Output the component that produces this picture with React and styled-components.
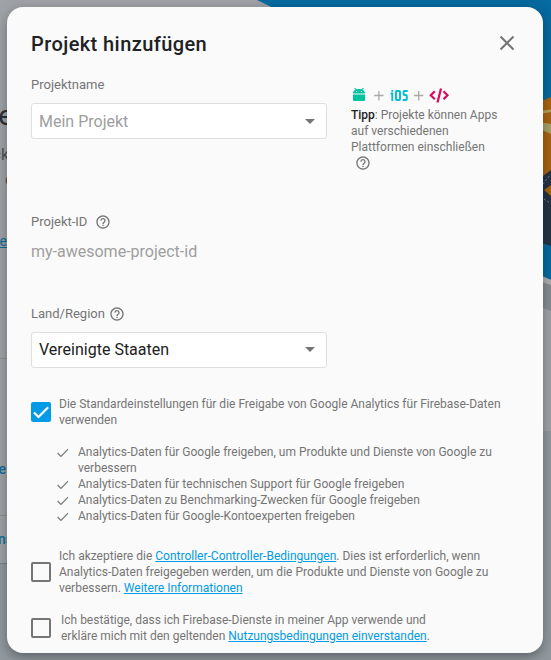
import React from "react";
import styled, { createGlobalStyle } from "styled-components";

const GlobalStyle = createGlobalStyle`
  * { box-sizing: border-box; }
  body {
    margin: 0;
    overflow: hidden;
    font-family: Roboto, "Liberation Sans", sans-serif;
    background: #a0a4a8;
  }
`;

const Screen = styled.div`
  position: relative;
  width: 551px;
  height: 660px;
  padding: 7px 8px 7px 7px;
  overflow: hidden;
`;

const Scene = styled.svg`
  position: absolute;
  inset: 0;
`;

const PageText = styled.span`
  position: absolute;
  right: ${(p) => p.$right}px;
  top: ${(p) => p.$top}px;
  font-size: ${(p) => p.$size}px;
  line-height: 20px;
  font-weight: ${(p) => p.$weight || 400};
  color: ${(p) => p.$color || "#505255"};
  text-decoration: ${(p) => (p.$underline ? "underline" : "none")};
  white-space: nowrap;
`;

const Dialog = styled.section`
  position: relative;
  width: 536px;
  height: 646px;
  padding: 24px;
  border-radius: 16px;
  background: #fafafa;
  box-shadow: 0 5px 10px -2px rgba(0, 0, 0, 0.25), 0 3px 16px 2px rgba(0, 0, 0, 0.16);
  color: #757575;
`;

const Header = styled.header`
  display: flex;
  justify-content: space-between;
  height: 41px;
`;

const Title = styled.h1`
  margin: 0;
  font-size: 20px;
  line-height: 26px;
  font-weight: 500;
  letter-spacing: 0.42px;
  color: #202124;
`;

const CloseButton = styled.button`
  width: 24px;
  height: 24px;
  padding: 0;
  border: 0;
  background: none;
  color: #757575;
`;

const FormTop = styled.div`
  display: grid;
  grid-template-columns: 296px 150px;
  column-gap: 24px;
  height: 137px;
`;

const Field = styled.div`
  display: flex;
  flex-direction: column;
  height: ${(p) => p.$height || "auto"};
`;

const Label = styled.div`
  display: flex;
  align-items: center;
  gap: ${(p) => p.$gap || 0}px;
  height: 24px;
  font-size: 13px;

  svg {
    margin-top: 2px;
  }
`;

const SelectBox = styled.div`
  display: flex;
  align-items: center;
  justify-content: space-between;
  width: 296px;
  height: 36px;
  margin-top: 7px;
  padding: 0 11px ${(p) => (p.$filled ? 2 : 0)}px 7px;
  border: 1px solid #dfdfdf;
  border-radius: 3px;
  background: #fff;
  font-size: 16px;
  color: ${(p) => (p.$filled ? "#212121" : "#9e9e9e")};
`;

const ProjectId = styled.div`
  margin-top: 9px;
  font-size: 16px;
  line-height: 20px;
  color: #9e9e9e;
`;

const Tip = styled.aside`
  padding-top: 14px;
  font-size: 12px;
  line-height: 16px;
`;

const Platforms = styled.svg`
  display: block;
  margin-bottom: 3px;
`;

const Strong = styled.b`
  font-weight: 500;
  color: #212121;
`;

const TipHelp = styled.div`
  display: flex;
  padding-left: 4px;
`;

const Consent = styled.label`
  display: flex;
  align-items: center;
  gap: ${(p) => p.$gap || 8}px;
  margin-top: ${(p) => p.$top}px;
  font-size: 12px;
  line-height: 16px;
`;

const Box = styled.span`
  display: flex;
  flex: none;
  align-items: center;
  justify-content: center;
  width: 20px;
  height: 20px;
  border: 2px solid ${(p) => (p.$checked ? "#039be5" : "#757575")};
  border-radius: 2px;
  background: ${(p) => (p.$checked ? "#039be5" : "transparent")};
`;

const BoxTick = styled.svg`
  flex: none;
`;

const Copy = styled.span`
  white-space: nowrap;
`;

const Link = styled.a`
  color: #039be5;
  text-decoration: underline;
`;

const SharingList = styled.ul`
  margin: 16px 0 0;
  padding: 0 0 0 26px;
  list-style: none;
  font-size: 12px;
  line-height: 16px;
`;

const SharingItem = styled.li`
  display: flex;
  gap: 9px;
  white-space: nowrap;
`;

const Tick = () => (
  <svg width="12" height="16" viewBox="0 0 12 16">
    <path d="M.6 9L4 12.400 11 5.200" fill="none" stroke="#757575" strokeWidth="1.200" />
  </svg>
);

const Help = () => (
  <svg width="16" height="16" viewBox="0 0 24 24" fill="#757575">
    <path d="M11 18h2v-2h-2v2zm1-16C6.48 2 2 6.48 2 12s4.48 10 10 10 10-4.48 10-10S17.52 2 12 2zm0 18c-4.41 0-8-3.59-8-8s3.59-8 8-8 8 3.590 8 8-3.590 8-8 8zm0-14c-2.210 0-4 1.790-4 4h2c0-1.100.900-2 2-2s2 .900 2 2c0 2-3 1.750-3 5h2c0-2.250 3-2.500 3-5 0-2.210-1.790-4-4-4z" />
  </svg>
);

const Caret = () => (
  <svg width="10" height="5" viewBox="0 0 10 5">
    <path d="M0 0h10L5 5z" fill="#757575" />
  </svg>
);

const PlatformIcons = () => (
  <Platforms width="100" height="18" viewBox="0 0 100 18" fill="none">
    <g fill="#00c4a0">
      <path d="M2 7.500C2 4.500 4.500 3 8 3s6 1.500 6 4.500zM2 8.500h12V14q0 1-1 1H3q-1 0-1-1z" />
      <path d="M3.200 2.600l.8-.8 2 2-.8.800zM12.800 2.600l-.8-.8-2 2 .8.800z" />
    </g>
    <path d="M5 5h1v1H5zM10 5h1v1h-1z" fill="#fafafa" />
    <path d="M23.200 9.500h9.300M27.900 5v9.500M63 9.500h9.300M67.700 5v9.500" stroke="#aaa" strokeWidth="1.300" />
    <g stroke="#00bcd4" strokeWidth="1.900">
      <path d="M39.600 7.500h1.700V15M41.300 4v1.800" />
      <rect x="45" y="5" width="4" height="9" rx="1" />
      <path d="M56.700 5H53.500q-.9 0-.9.900v2.200q0 .9.9.900h1.400q.9 0 .9.900v3.200q0 .9-.9.900H51.700" />
    </g>
    <path d="M83.800 5.200L79.800 9.200l4 4M92.500 5.200l4 4-4 4M90 2.500L86.500 16.500" stroke="#d80b60" strokeWidth="2.200" />
  </Platforms>
);

const Illustration = () => (
  <Scene width="551" height="660" viewBox="0 0 551 660">
    <path d="M0 563H530V431H551V660H0z" fill="#929a9f" />
    <path d="M0 358.500H7M0 515.500H7" stroke="#8b8e92" />
    <path d="M0 563.500H10" stroke="#7c8185" />
    <path d="M257 0H551V280L530 270V20H298z" fill="#066ba1" />
    <path d="M530 106L551 97V198H530z" fill="#a9650f" />
    <path d="M540 111L551 109.500V112L540 114z" fill="#b5a558" />
    <path d="M540 122L551 124V134L540 129z" fill="#a9a465" />
    <path d="M530 186L551 170V185L544 190L551 196V246L530 239z" fill="#253447" />
    <path d="M543 184L550 175M544 199L550 203" stroke="#7c8790" strokeDasharray="2 2" />
    <path d="M530 272L551 280V311L530 303z" fill="#878e94" />
    <path d="M530 272L551 280V285L530 278z" fill="#afb0b2" />
  </Scene>
);

const sharing = [
  <>Analytics-Daten für Google freigeben, um Produkte und Dienste von Google zu<br />verbessern</>,
  "Analytics-Daten für technischen Support für Google freigeben",
  "Analytics-Daten zu Benchmarking-Zwecken für Google freigeben",
  "Analytics-Daten für Google-Kontoexperten freigeben",
];

export default function App() {
  return (
    <>
      <GlobalStyle />
      <Screen>
        <Illustration />
        <PageText $right={538} $top={106} $size={28} $color="#2d2f33">e</PageText>
        <PageText $right={542} $top={145} $size={16}>ck</PageText>
        <PageText $right={537} $top={170} $size={16}>d</PageText>
        <PageText $right={544} $top={231} $size={14} $color="#126d9b" $underline>e</PageText>
        <PageText $right={545} $top={459} $size={14} $weight={500} $color="#126d9b">e</PageText>
        <PageText $right={538} $top={529} $size={14} $weight={500} $color="#126d9b">ns</PageText>
        <Dialog role="dialog" aria-labelledby="dialog-title">
          <Header>
            <Title id="dialog-title">Projekt hinzufügen</Title>
            <CloseButton aria-label="Schließen">
              <svg width="24" height="24" viewBox="0 0 24 24" fill="none">
                <path d="M5.500 5.500l13 13M18.500 5.500l-13 13" stroke="currentColor" strokeWidth="2" />
              </svg>
            </CloseButton>
          </Header>
          <FormTop>
            <Field>
              <Label>Projektname</Label>
              <SelectBox>Mein Projekt<Caret /></SelectBox>
            </Field>
            <Tip>
              <PlatformIcons />
              <Copy><Strong>Tipp</Strong>: Projekte können Apps<br />auf verschiedenen<br />Plattformen einschließen</Copy>
              <TipHelp><Help /></TipHelp>
            </Tip>
          </FormTop>
          <Field $height="92px">
            <Label $gap={7.5}>Projekt-ID<Help /></Label>
            <ProjectId>my-awesome-project-id</ProjectId>
          </Field>
          <Field $height="67px">
            <Label $gap={4}>Land/Region<Help /></Label>
            <SelectBox $filled>Vereinigte Staaten<Caret /></SelectBox>
          </Field>
          <Consent $top={28}>
            <Box $checked>
              <BoxTick width="20" height="20" viewBox="0 0 20 20">
                <path d="M3 10.500l4.500 4.500L17.200 5.200" fill="none" stroke="#fff" strokeWidth="2.200" />
              </BoxTick>
            </Box>
            <Copy>Die Standardeinstellungen für die Freigabe von Google Analytics für Firebase-Daten<br />verwenden</Copy>
          </Consent>
          <SharingList>
            {sharing.map((text, i) => (
              <SharingItem key={i}><Tick /><span>{text}</span></SharingItem>
            ))}
          </SharingList>
          <Consent $top={24}>
            <Box />
            <Copy>
              Ich akzeptiere die <Link>Controller-Controller-Bedingungen</Link>. Dies ist erforderlich, wenn<br />
              Analytics-Daten freigegeben werden, um die Produkte und Dienste von Google zu<br />
              verbessern. <Link>Weitere Informationen</Link>
            </Copy>
          </Consent>
          <Consent $top={16} $gap={10}>
            <Box />
            <Copy>
              Ich bestätige, dass ich Firebase-Dienste in meiner App verwende und<br />
              erkläre mich mit den geltenden <Link>Nutzungsbedingungen einverstanden</Link>.
            </Copy>
          </Consent>
        </Dialog>
      </Screen>
    </>
  );
}
